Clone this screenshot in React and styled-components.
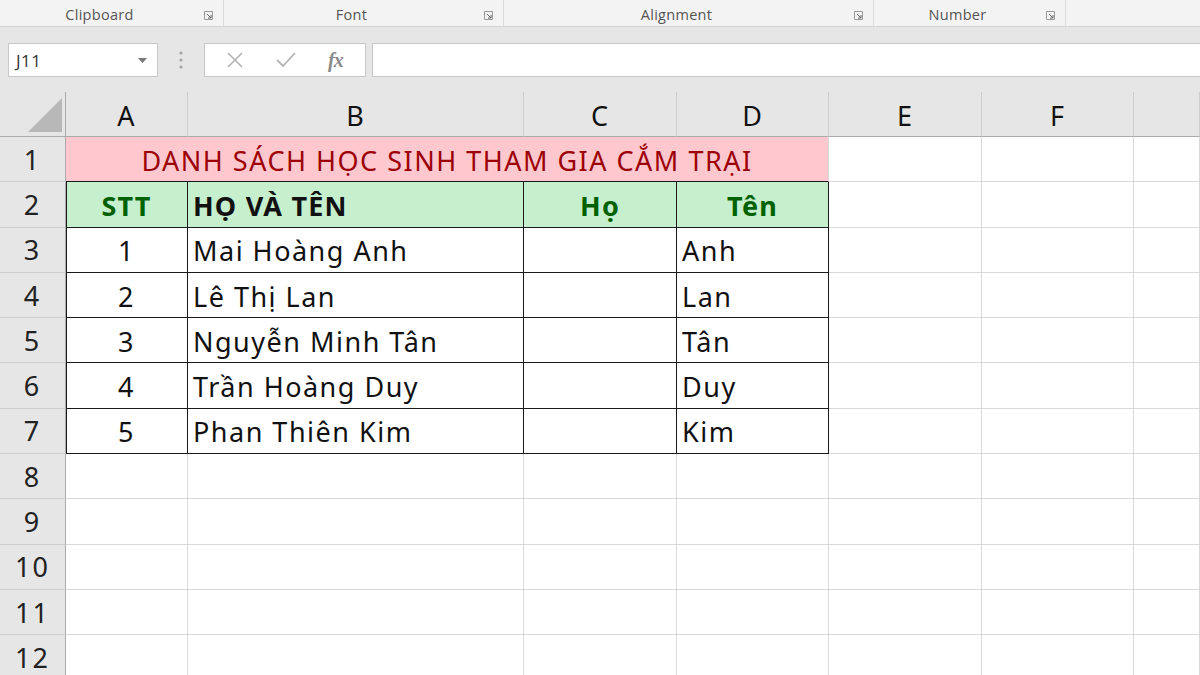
import React from 'react';
import styled, { createGlobalStyle } from 'styled-components';

const GlobalStyle = createGlobalStyle`
  html, body {
    margin: 0;
    padding: 0;
    background: #fff;
    overflow: hidden;
  }
  * {
    box-sizing: border-box;
  }
`;

const Page = styled.div`
  width: 1200px;
  height: 675px;
  overflow: hidden;
  font-family: 'Open Sans', 'Noto Sans', sans-serif;
`;

const RibbonLabels = styled.div`
  display: flex;
  height: 27px;
  background: #f3f3f3;
  border-bottom: 1px solid #d4d4d4;
`;

const Group = styled.div`
  position: relative;
  width: ${(p) => p.$w}px;
  flex: none;
  display: flex;
  align-items: center;
  justify-content: center;
  padding: 3px 24px 0 0;
  border-right: 1px solid #dcdcdc;
  font-size: 14.5px;
  letter-spacing: 0.3px;
  color: #555;
`;

const Launcher = styled.svg`
  position: absolute;
  right: 10px;
  top: 11px;
`;

const FormulaRow = styled.div`
  display: flex;
  align-items: flex-start;
  height: 65px;
  padding: 16px 0 0 8px;
  background: #e6e6e6;
`;

const NameBox = styled.div`
  width: 150px;
  height: 34px;
  display: flex;
  align-items: center;
  justify-content: space-between;
  padding: 0 10px 0 7px;
  background: #fff;
  border: 1px solid #c8c8c8;
  font-size: 17px;
  letter-spacing: 0.5px;
  color: #333;
`;

const Grip = styled.div`
  width: 46px;
  height: 34px;
  display: flex;
  align-items: center;
  justify-content: center;
`;

const FxButtons = styled.div`
  width: 162px;
  height: 34px;
  display: flex;
  align-items: center;
  justify-content: space-around;
  padding: 0 6px;
  background: #fff;
  border: 1px solid #c8c8c8;
`;

const FxLabel = styled.span`
  font-family: 'Liberation Serif', serif;
  font-style: italic;
  font-weight: bold;
  font-size: 20px;
  color: #8a8a8a;
  letter-spacing: -1px;
`;

const FormulaInput = styled.div`
  flex: 1;
  height: 34px;
  margin-left: 6px;
  background: #fff;
  border: 1px solid #c8c8c8;
  border-right: none;
`;

const Sheet = styled.div`
  display: grid;
  grid-template-columns: 66px 122px 336px 153px 152px 153px 152px 1fr;
  grid-template-rows: 45px;
  grid-auto-rows: 45.3px;
  font-family: 'Noto Sans', 'Open Sans', sans-serif;
`;

const Corner = styled.div`
  display: flex;
  align-items: flex-end;
  justify-content: flex-end;
  padding: 0 3px 4px 0;
  background: #e6e6e6;
  border-right: 1px solid #ababab;
  border-bottom: 1px solid #ababab;
`;

const ColHead = styled.div`
  display: flex;
  align-items: center;
  justify-content: center;
  padding-top: 3px;
  background: #e6e6e6;
  border-right: 1px solid #cdcdcd;
  border-bottom: 1px solid #ababab;
  font-size: 27px;
  letter-spacing: 1px;
  color: #111;
`;

const RowHead = styled.div`
  display: flex;
  align-items: center;
  justify-content: center;
  background: #e6e6e6;
  border-right: 1px solid #ababab;
  border-bottom: 1px solid #cfcfcf;
  font-size: 27px;
  letter-spacing: 2px;
  color: #222;
`;

const Cell = styled.div`
  display: flex;
  align-items: center;
  justify-content: ${(p) => (p.$center ? 'center' : 'flex-start')};
  padding: 2px 5px 0;
  grid-column: ${(p) => (p.$span ? `span ${p.$span}` : 'auto')};
  background: ${(p) => p.$fill || '#fff'};
  border-right: 1px solid ${(p) => (p.$boxed ? '#1a1a1a' : '#d9d9d9')};
  border-bottom: 1px solid ${(p) => (p.$boxed || p.$underline ? '#1a1a1a' : '#d9d9d9')};
  box-shadow: ${(p) => (p.$leftEdge ? 'inset 1px 0 0 #1a1a1a' : 'none')};
  font-size: 27px;
  letter-spacing: ${(p) => (p.$bold ? '1.2px' : '1.5px')};
  font-weight: ${(p) => (p.$bold ? 700 : 400)};
  color: ${(p) => p.$color || '#111'};
  white-space: nowrap;
`;

const columns = ['A', 'B', 'C', 'D', 'E', 'F', ''];

const students = [
  ['1', 'Mai Hoàng Anh', 'Anh'],
  ['2', 'Lê Thị Lan', 'Lan'],
  ['3', 'Nguyễn Minh Tân', 'Tân'],
  ['4', 'Trần Hoàng Duy', 'Duy'],
  ['5', 'Phan Thiên Kim', 'Kim'],
];

const groups = [
  { name: 'Clipboard', w: 224 },
  { name: 'Font', w: 280 },
  { name: 'Alignment', w: 370 },
  { name: 'Number', w: 192 },
];

const GOOD_FILL = '#c6efce';
const GOOD_TEXT = '#006100';

function LauncherIcon() {
  return (
    <Launcher width="9" height="9" viewBox="0 0 9 9">
      <path d="M0.5 0.5h8v8h-8z" fill="none" stroke="#9a9a9a" />
      <path d="M3 3l4 4M4 7h3V4" fill="none" stroke="#666" />
    </Launcher>
  );
}

function EmptyCells({ from }) {
  return columns.slice(from).map((c, i) => <Cell key={`e${i}`} />);
}

function App() {
  return (
    <Page>
      <GlobalStyle />
      <RibbonLabels>
        {groups.map((g) => (
          <Group key={g.name} $w={g.w}>
            {g.name}
            <LauncherIcon />
          </Group>
        ))}
      </RibbonLabels>

      <FormulaRow>
        <NameBox>
          J11
          <svg width="9" height="5" viewBox="0 0 9 5">
            <path d="M0 0h9L4.5 5z" fill="#777" />
          </svg>
        </NameBox>
        <Grip>
          <svg width="4" height="20" viewBox="0 0 4 20">
            <circle cx="2" cy="3" r="1.6" fill="#a6a6a6" />
            <circle cx="2" cy="10" r="1.6" fill="#a6a6a6" />
            <circle cx="2" cy="17" r="1.6" fill="#a6a6a6" />
          </svg>
        </Grip>
        <FxButtons>
          <svg width="16" height="16" viewBox="0 0 16 16">
            <path d="M1 1l14 14M15 1L1 15" stroke="#b4b4b4" strokeWidth="1.6" />
          </svg>
          <svg width="20" height="16" viewBox="0 0 20 16">
            <path d="M1 8l6 6L19 1" fill="none" stroke="#b4b4b4" strokeWidth="1.8" />
          </svg>
          <FxLabel>fx</FxLabel>
        </FxButtons>
        <FormulaInput />
      </FormulaRow>

      <Sheet>
        <Corner>
          <svg width="34" height="34" viewBox="0 0 34 34">
            <path d="M34 0V34H0z" fill="#b8b8b8" />
          </svg>
        </Corner>
        {columns.map((c, i) => (
          <ColHead key={i}>{c}</ColHead>
        ))}

        <RowHead>1</RowHead>
        <Cell $span={4} $center $fill="#ffc7ce" $color="#9c0006" $underline>
          DANH SÁCH HỌC SINH THAM GIA CẮM TRẠI
        </Cell>
        <EmptyCells from={4} />

        <RowHead>2</RowHead>
        <Cell $boxed $leftEdge $center $bold $fill={GOOD_FILL} $color={GOOD_TEXT}>
          STT
        </Cell>
        <Cell $boxed $bold $fill={GOOD_FILL}>
          HỌ VÀ TÊN
        </Cell>
        <Cell $boxed $center $bold $fill={GOOD_FILL} $color={GOOD_TEXT}>
          Họ
        </Cell>
        <Cell $boxed $center $bold $fill={GOOD_FILL} $color={GOOD_TEXT}>
          Tên
        </Cell>
        <EmptyCells from={4} />

        {students.map(([n, full, last], r) => (
          <React.Fragment key={n}>
            <RowHead>{r + 3}</RowHead>
            <Cell $boxed $leftEdge $center>
              {n}
            </Cell>
            <Cell $boxed>{full}</Cell>
            <Cell $boxed />
            <Cell $boxed>{last}</Cell>
            <EmptyCells from={4} />
          </React.Fragment>
        ))}

        {[8, 9, 10, 11, 12].map((r) => (
          <React.Fragment key={r}>
            <RowHead>{r}</RowHead>
            <EmptyCells from={0} />
          </React.Fragment>
        ))}
      </Sheet>
    </Page>
  );
}

export default App;
